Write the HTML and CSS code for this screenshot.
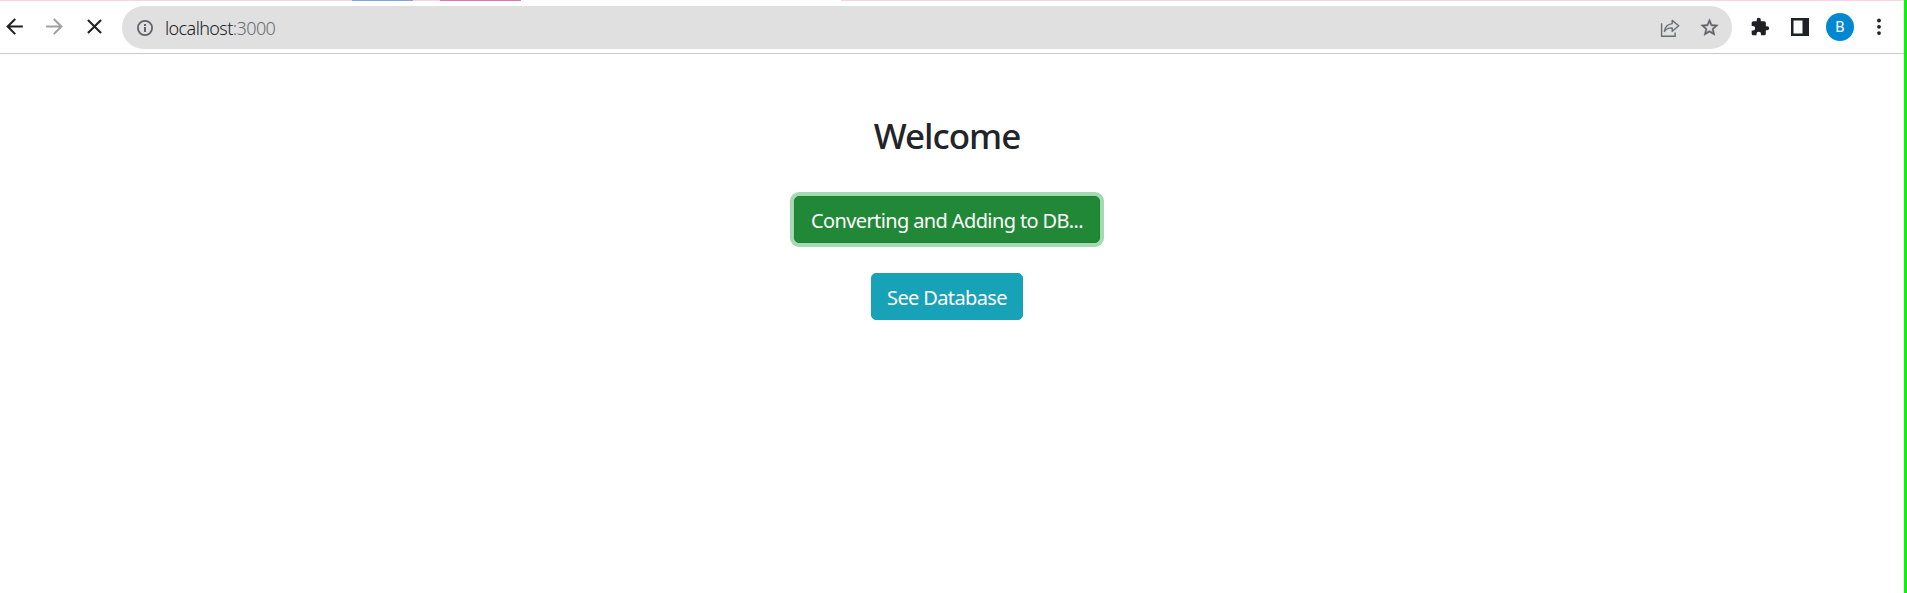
FILE: index.html
```html
<!DOCTYPE html>
<html lang="en">
<head>
<meta charset="utf-8">
<title>localhost:3000</title>
<link rel="stylesheet" href="styles.css">
</head>
<body>
<div class="window">
  <div class="tab-strip"><i class="group blue"></i><i class="group pink"></i><i class="active-tab"></i></div>
  <header class="toolbar">
    <nav class="nav">
      <svg class="icon" viewBox="0 0 24 24"><path d="M20 11H7.8l5.6-5.6L12 4l-8 8 8 8 1.4-1.4L7.8 13H20z"/></svg>
      <svg class="icon muted" viewBox="0 0 24 24"><path d="M4 11h12.2l-5.6-5.6L12 4l8 8-8 8-1.4-1.4 5.6-5.6H4z"/></svg>
      <svg class="icon" viewBox="0 0 24 24"><path d="M19 6.4 17.6 5 12 10.6 6.4 5 5 6.4l5.6 5.6L5 17.6 6.4 19l5.6-5.6 5.6 5.6 1.4-1.4-5.6-5.6z"/></svg>
    </nav>
    <div class="address">
      <svg class="info" viewBox="0 0 16 16"><circle cx="8" cy="8" r="7.1" fill="none" stroke="#5f6368" stroke-width="1.8"/><path fill="#5f6368" d="M7 7h2v5H7zM7 4h2v2H7z"/></svg>
      <span class="url">localhost<span class="port">:3000</span></span>
      <svg class="share" viewBox="0 0 20 20" fill="none" stroke="#6a6d71" stroke-width="1.4"><path d="M1.600 5.300v13h13.500v-3.700"/><path stroke-linejoin="round" d="M12.200 2.400 18.700 7.800l-6.500 5.500V9.900c-3.600-.1-6.200 1.100-7.800 3.500.5-4.100 3.300-7.200 7.800-7.800z"/></svg>
      <svg class="star" viewBox="0 0 24 24"><path d="m22 9.200-7.200-.6L12 2 9.200 8.600 2 9.200l5.500 4.700L5.800 21l6.200-3.700 6.200 3.700-1.600-7.100zM12 15.400l-3.800 2.300 1-4.300-3.300-2.900 4.400-.4L12 6.100l1.700 4 4.400.4-3.300 2.900 1 4.300z"/></svg>
    </div>
    <div class="tools">
      <svg class="puzzle" viewBox="0 0 24 24"><path d="M20.500 11H19V7a2 2 0 0 0-2-2h-4V3.500a2.500 2.500 0 0 0-5 0V5H4a2 2 0 0 0-2 2v3.800h1.500a2.700 2.700 0 0 1 0 5.400H2V20a2 2 0 0 0 2 2h3.800v-1.500a2.700 2.700 0 0 1 5.400 0V22H17a2 2 0 0 0 2-2v-4h1.500a2.500 2.500 0 0 0 0-5z"/></svg>
      <svg class="panel" viewBox="0 0 18 18"><path fill-rule="evenodd" d="M0 0h18v18H0zM2.500 2.500v13h9v-13z"/></svg>
      <span class="avatar">B</span>
      <svg class="more" viewBox="0 0 4 18"><circle cx="2" cy="2.500" r="1.900"/><circle cx="2" cy="8.800" r="1.900"/><circle cx="2" cy="15.100" r="1.900"/></svg>
    </div>
  </header>
  <main class="page">
    <h1 class="title">Welcome</h1>
    <button class="btn success">Converting and Adding to DB...</button>
    <button class="btn info-btn">See Database</button>
  </main>
</div>
</body>
</html>
```
FILE: styles.css
```css
* { box-sizing: border-box; }
body { margin: 0; background: #fff; font-family: "Noto Sans", "Open Sans", sans-serif; }
svg { display: block; flex: none; }
.window { height: 593px; border-right: 3px solid #00fa00; overflow: hidden; }
.tab-strip { display: flex; height: 1px; background: #f8d3e4; }
.group { height: 1px; }
.blue { margin-left: 352px; width: 61px; background: #83a0e5; }
.pink { margin-left: 27px; width: 81px; background: #e471b0; }
.active-tab { width: 320px; background: #fff; }
.toolbar { display: flex; align-items: center; height: 53px; padding: 1px 0 0 2px; border-bottom: 1px solid #cbcbcb; }
.nav { display: flex; gap: 15px; width: 120px; padding-bottom: 2px; }
.icon { width: 25px; height: 25px; fill: #202124; }
.muted { fill: #a0a0a0; }
.address { display: flex; align-items: center; width: 1610px; height: 43px; padding: 0 12px 0 15px; border-radius: 22px; background: #e0e0e0; }
.info { width: 16px; height: 16px; }
.url { margin-left: 12px; font-size: 18px; font-weight: 300; line-height: 24px; letter-spacing: -.6px; color: #202124; white-space: nowrap; }
.port { color: #6a6d71; }
.share { width: 20px; height: 20px; margin-left: auto; }
.star { width: 21px; height: 21px; margin-left: 19px; fill: #5f6368; stroke: #5f6368; stroke-width: .5; }
.tools { display: flex; align-items: center; padding-bottom: 1px; fill: #202124; }
.puzzle { width: 20px; height: 20px; margin-left: 18px; }
.panel { width: 18px; height: 18px; margin-left: 21px; }
.avatar { width: 28px; height: 28px; margin-left: 17px; border-radius: 50%; background: #0288d1; color: #fff; font: 15px/28px Roboto, sans-serif; text-align: center; }
.more { width: 4px; height: 18px; margin-left: 23px; }
.page { display: flex; flex-direction: column; align-items: center; width: 1894px; padding-top: 60px; }
.title { margin: 0 0 39px; font-size: 35px; line-height: 43px; font-weight: 500; letter-spacing: -1px; color: #212529; }
.btn { height: 47px; padding: 2px 0 0; border: 1px solid; border-radius: 5px; font: 20px/30px "Noto Sans", "Open Sans", sans-serif; letter-spacing: -.62px; color: #fff; white-space: nowrap; }
.success { width: 306px; background: #218838; border-color: #1e7e34; box-shadow: 0 0 0 4px #a3dab1; }
.info-btn { width: 152px; margin-top: 30px; background: #17a2b8; border-color: #17a2b8; }
```
